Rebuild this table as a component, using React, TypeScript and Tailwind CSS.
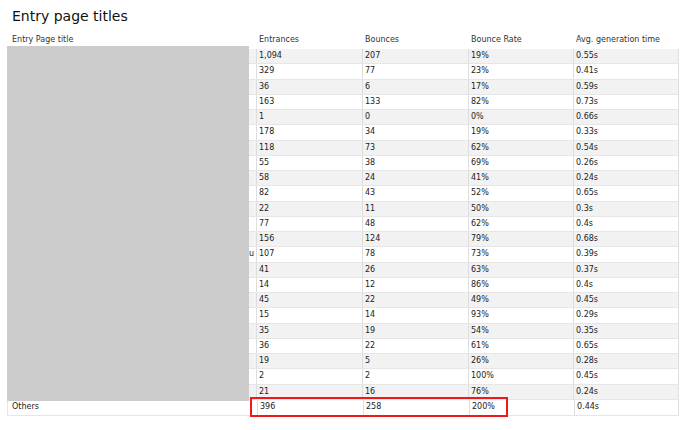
import React from 'react';

const rows: [string, string, string, string][] = [
  ['1,094', '207', '19%', '0.55s'],
  ['329', '77', '23%', '0.41s'],
  ['36', '6', '17%', '0.59s'],
  ['163', '133', '82%', '0.73s'],
  ['1', '0', '0%', '0.66s'],
  ['178', '34', '19%', '0.33s'],
  ['118', '73', '62%', '0.54s'],
  ['55', '38', '69%', '0.26s'],
  ['58', '24', '41%', '0.24s'],
  ['82', '43', '52%', '0.65s'],
  ['22', '11', '50%', '0.3s'],
  ['77', '48', '62%', '0.4s'],
  ['156', '124', '79%', '0.68s'],
  ['107', '78', '73%', '0.39s'],
  ['41', '26', '63%', '0.37s'],
  ['14', '12', '86%', '0.4s'],
  ['45', '22', '49%', '0.45s'],
  ['15', '14', '93%', '0.29s'],
  ['35', '19', '54%', '0.35s'],
  ['36', '22', '61%', '0.65s'],
  ['19', '5', '26%', '0.28s'],
  ['2', '2', '100%', '0.45s'],
  ['21', '16', '76%', '0.24s'],
];

const grid = 'grid grid-cols-[249px_106px_106px_105px_106px]';
const cell = 'px-[2px] flex items-center border-l border-[#dedede] first:border-l-0 truncate';

export default function App() {
  return (
    <div className="w-[690px] h-[430px] bg-white text-[#222] font-['DejaVu_Sans',sans-serif]">
      <h2 className="pl-[12px] pt-[5px] h-[31px] text-[14px] leading-[22px] text-[#111]">Entry page titles</h2>

      <div className="relative ml-[7px] w-[672px]">
        {/* header */}
        <div className={`${grid} h-[18px] text-[8px] text-[#333]`}>
          {['Entry Page title', 'Entrances', 'Bounces', 'Bounce Rate', 'Avg. generation time'].map((h, i) => (
            <div key={i} className="px-[3px] first:pl-[5px] flex items-center">{h}</div>
          ))}
        </div>

        {/* body */}
        <div className="border-r border-[#dedede] text-[8px] text-[#222]">
          {rows.map((r, i) => (
            <div
              key={i}
              className={`${grid} h-[15.25px] border-b border-[#e6e6e6] ${i % 2 === 0 ? 'bg-[#f2f2f2]' : 'bg-white'}`}
            >
              <div className={`${cell} justify-end`}>{i === 13 ? 'u' : ''}</div>
              {r.map((v, j) => (
                <div key={j} className={cell}>{v}</div>
              ))}
            </div>
          ))}
          <div className={`${grid} h-[16px] border-b border-l border-[#e6e6e6] bg-white`}>
            <div className={`${cell} pl-[4px]`}>Others</div>
            <div className={cell}>396</div>
            <div className={cell}>258</div>
            <div className={cell}>200%</div>
            <div className={cell}>0.44s</div>
          </div>
        </div>

        {/* redaction overlay */}
        <div className="absolute left-0 top-[15px] w-[242px] h-[355px] bg-[#cccccc]" />

        {/* highlight */}
        <div className="absolute left-[243px] top-[366px] w-[258px] h-[20px] border-2 border-[#f01818]" />
      </div>
    </div>
  );
}
